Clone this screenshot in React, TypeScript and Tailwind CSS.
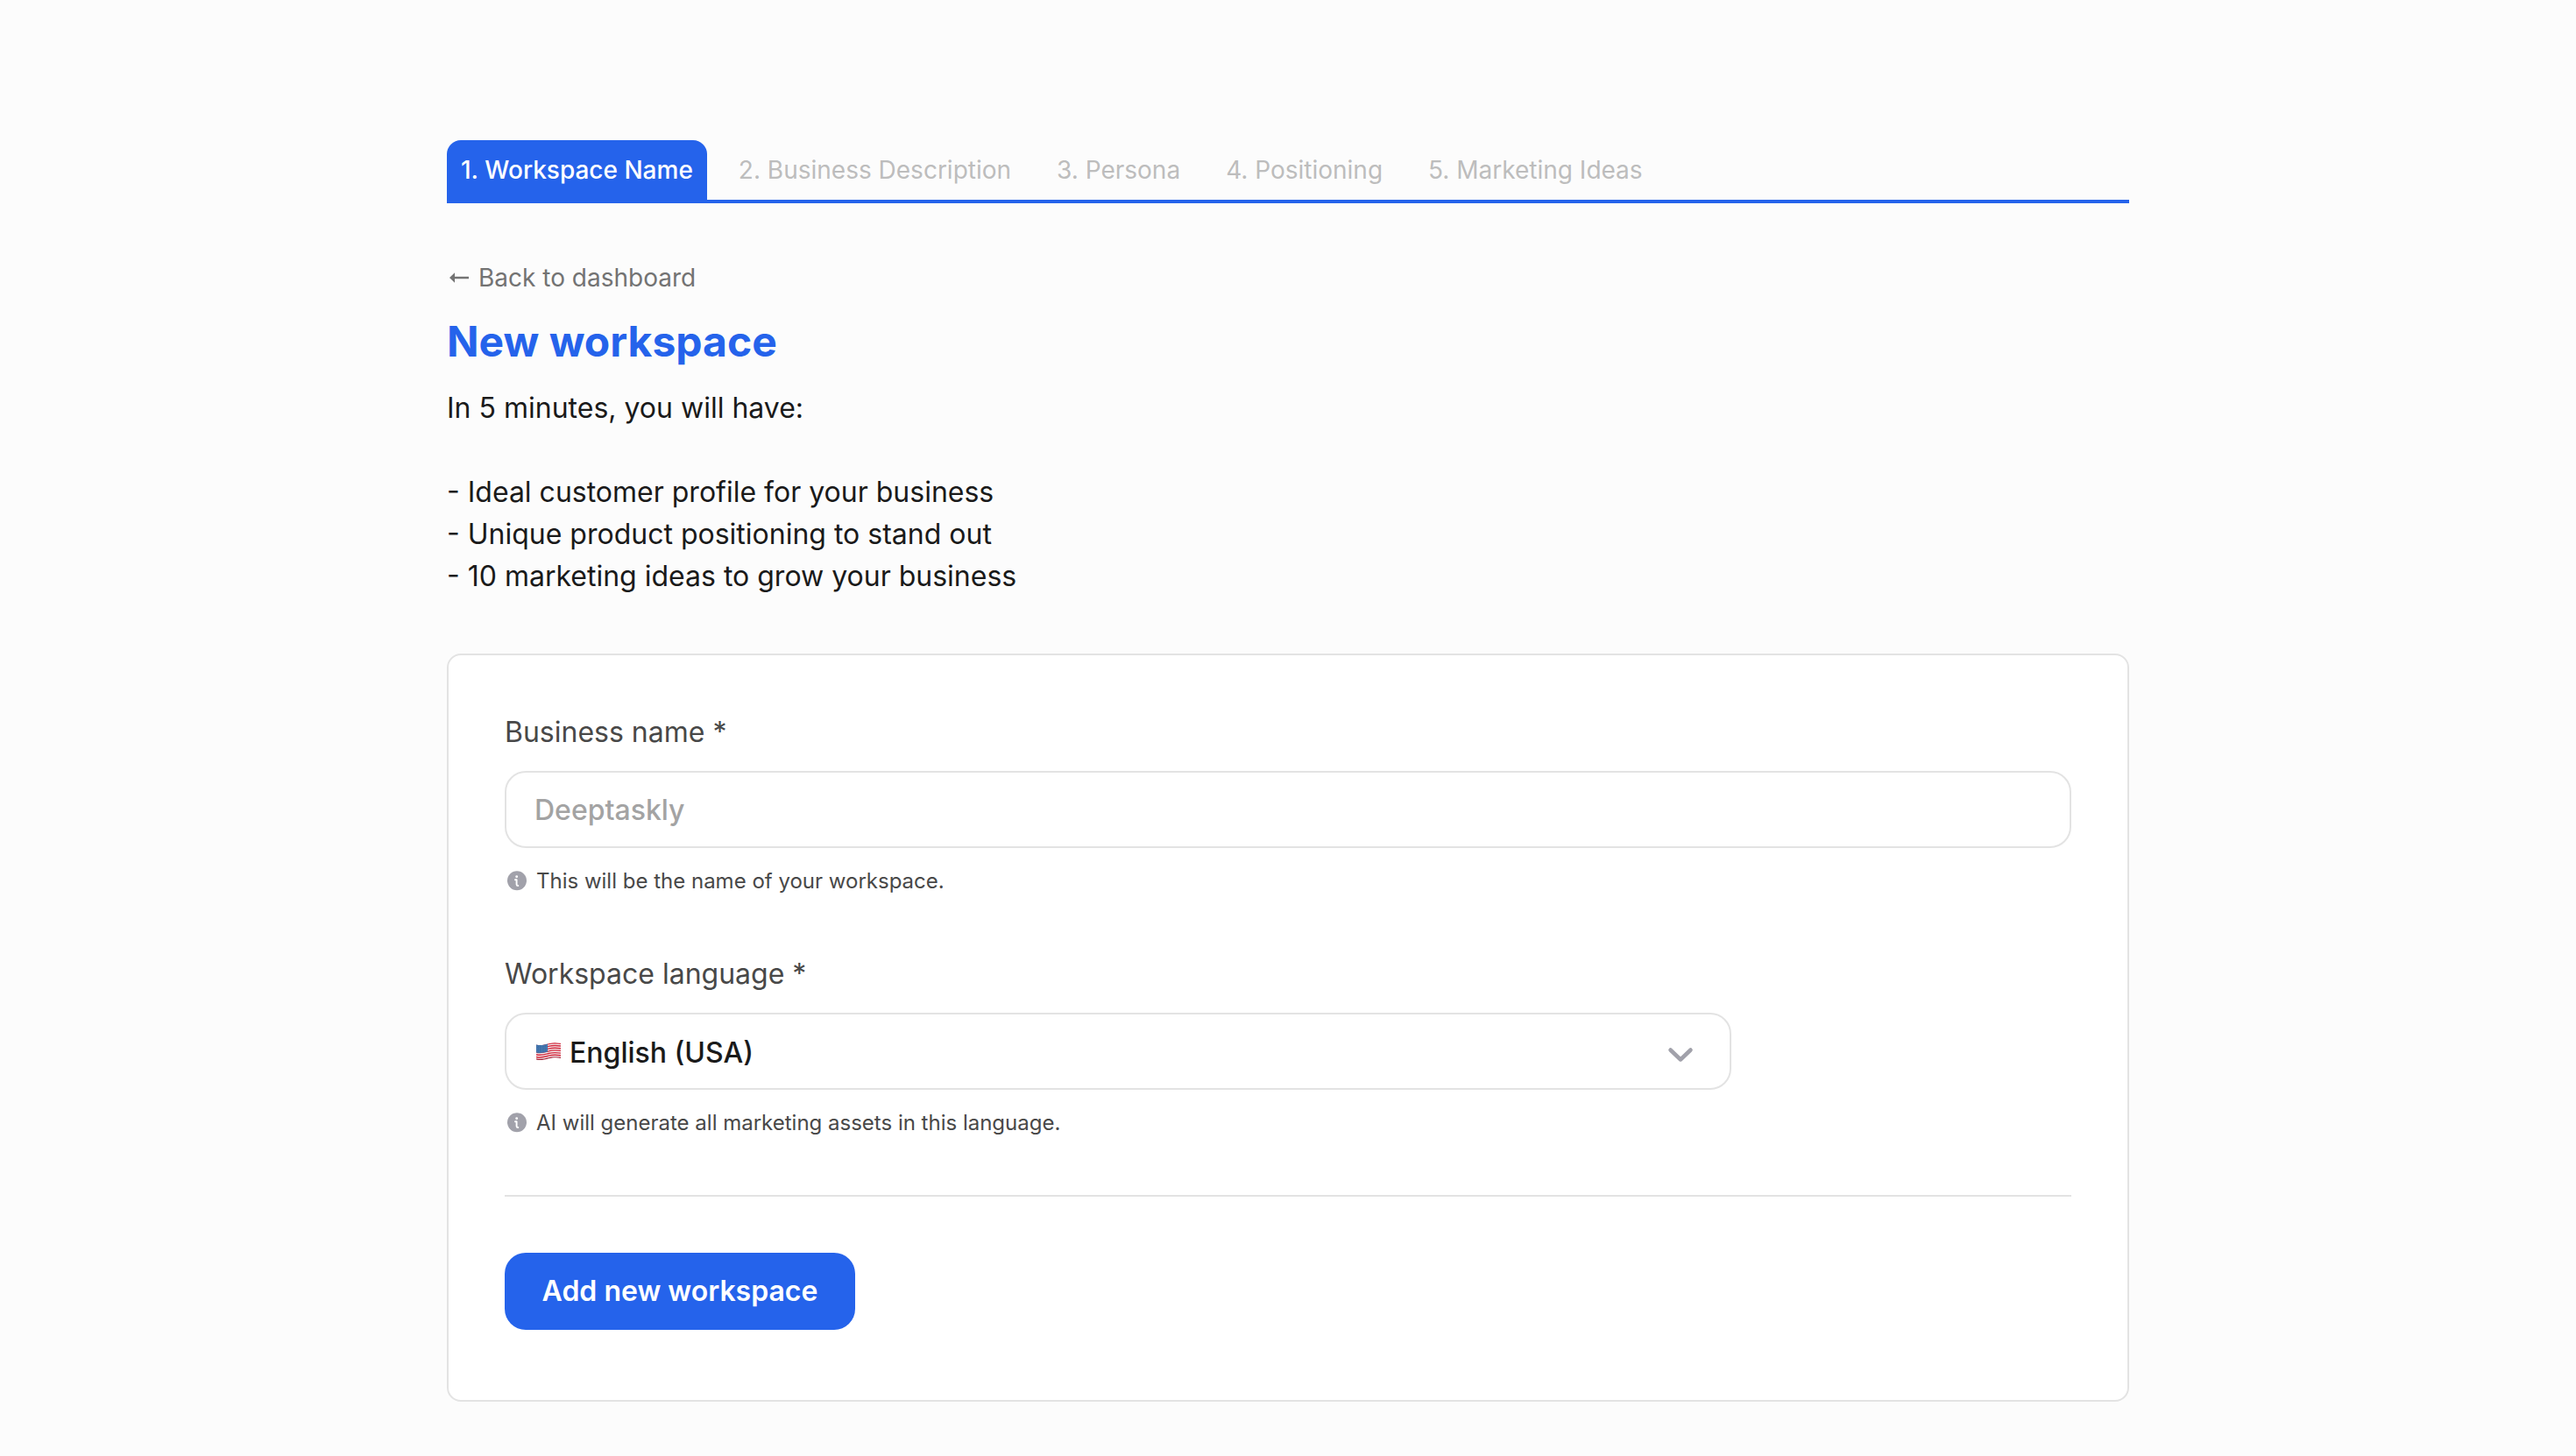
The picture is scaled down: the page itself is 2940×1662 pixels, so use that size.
import type { ReactNode } from "react";

const steps = [
  "1. Workspace Name",
  "2. Business Description",
  "3. Persona",
  "4. Positioning",
  "5. Marketing Ideas",
];

const outcomes = [
  "Ideal customer profile for your business",
  "Unique product positioning to stand out",
  "10 marketing ideas to grow your business",
];

function InfoIcon() {
  return (
    <svg viewBox="0 0 28 28" className="size-7 shrink-0" fill="none" aria-hidden="true">
      <circle cx="14" cy="13.300" r="11" fill="#a1a1aa" />
      <circle cx="13.700" cy="8.700" r="1.400" fill="#fff" />
      <path
        d="M12 12.200H13.600V17.600Q13.700 19 15.300 19"
        stroke="#fff"
        strokeWidth="1.900"
        strokeLinecap="round"
        strokeLinejoin="round"
      />
    </svg>
  );
}

function UsFlag() {
  return (
    <svg viewBox="0 0 28 20" className="h-5 w-7" aria-hidden="true">
      <defs>
        <clipPath id="us-flag-shape">
          <path d="M0 2.4C5 4 9 2.6 14 1.2S23 .1 28 .8V18C23 16.800 19 17.200 14 18.600S5 20.600 0 19.400Z" />
        </clipPath>
      </defs>
      <g clipPath="url(#us-flag-shape)">
        <rect width="28" height="20" fill="#f1eeee" />
        <g fill="none" stroke="#d5283d" strokeWidth="1.4">
          <path d="M0 2.900C5 4.500 9 3.100 14 1.700S23 .6 28 1.300" />
          <path d="M0 5.600C5 7.200 9 5.800 14 4.400S23 3.300 28 4" />
          <path d="M0 8.300C5 9.900 9 8.500 14 7.100S23 6 28 6.700" />
          <path d="M0 11C5 12.600 9 11.200 14 9.800S23 8.700 28 9.400" />
          <path d="M0 13.700C5 15.300 9 13.900 14 12.500S23 11.400 28 12.100" />
          <path d="M0 16.400C5 18 9 16.600 14 15.200S23 14.100 28 14.800" />
          <path d="M0 18.900C5 20.300 9 19.300 14 17.900S23 16.800 28 17.500" stroke="#a82338" />
        </g>
        <path d="M0 0H13V10.600C9 11.800 5 12.600 0 11.400Z" fill="#3a6ea8" />
        <g fill="#86a8cc">
          {[4.5, 6.5, 8.5, 10.5].map((y) =>
            [1.5, 4, 6.5, 9, 11.5].map((x) => <circle key={`${x}-${y}`} cx={x} cy={y - x / 12} r="0.45" />),
          )}
        </g>
      </g>
    </svg>
  );
}

function Field({ id, label, hint, children }: { id: string; label: string; hint: string; children: ReactNode }) {
  return (
    <div className="mb-16">
      <label htmlFor={id} className="mb-5 block text-[32px] leading-[48px] text-[#484848]">
        {label}
      </label>
      {children}
      <p id={`${id}-hint`} className="mt-5 flex items-center gap-2 text-2xl leading-9 text-[#484848]">
        <InfoIcon />
        {hint}
      </p>
    </div>
  );
}

export default function App() {
  return (
    <div className="min-h-screen bg-[#fcfcfc] px-8 pt-40 pb-[62px] font-['Inter',sans-serif] text-[#1a1a1a]">
      <main className="mx-auto max-w-[1920px]">
        <nav aria-label="Setup steps" className="flex gap-5 border-b-4 border-[#2563eb] text-[28px] leading-[42px]">
          {steps.map((step, i) =>
            i === 0 ? (
              <button
                key={step}
                type="button"
                aria-current="step"
                className="rounded-t-2xl bg-[#2563eb] px-4 py-[13px] font-medium text-white"
              >
                {step}
              </button>
            ) : (
              <button key={step} type="button" disabled className="px-4 py-[13px] text-[#bdbdbd]">
                {step}
              </button>
            ),
          )}
        </nav>

        <a
          href="#dashboard"
          className="mt-16 flex w-fit items-center gap-2 text-[28px] leading-[42px] text-[#737373]"
        >
          <svg viewBox="0 0 28 28" className="size-7" fill="currentColor" aria-hidden="true">
            <path d="M3 14 9 8.200V12.800H25V15.200H9V19.800Z" />
          </svg>
          Back to dashboard
        </a>
        <h1 className="mt-4 text-5xl leading-[72px] font-bold text-[#2563eb]">New workspace</h1>
        <div className="mt-4 text-[32px] leading-[48px]">
          <p>In 5 minutes, you will have:</p>
          <ul className="mt-12">
            {outcomes.map((item) => (
              <li key={item}>- {item}</li>
            ))}
          </ul>
        </div>

        <form
          className="mt-16 rounded-2xl border-2 border-[#e3e3e3] bg-white px-16 pt-16 pb-20"
          onSubmit={(e) => e.preventDefault()}
        >
          <Field id="business-name" label="Business name *" hint="This will be the name of your workspace.">
            <input
              id="business-name"
              type="text"
              required
              aria-describedby="business-name-hint"
              placeholder="Deeptaskly"
              className="block h-22 w-full rounded-3xl border-2 border-[#e3e3e3] bg-white px-8 text-[32px] font-medium placeholder:text-[#a3a3a3]"
            />
          </Field>

          <Field
            id="workspace-language"
            label="Workspace language *"
            hint="AI will generate all marketing assets in this language."
          >
            <div className="relative max-w-[1400px]">
              <select
                id="workspace-language"
                aria-describedby="workspace-language-hint"
                className="block h-22 w-full appearance-none rounded-3xl border-2 border-[#e3e3e3] bg-white pt-1 pr-20 pl-[72px] text-[32px] font-medium"
              >
                <option>English (USA)</option>
              </select>
              <div className="pointer-events-none absolute inset-y-0 right-[43px] left-9 flex items-center justify-between">
                <UsFlag />
                <svg viewBox="0 0 30 18" className="mt-2 h-[18px] w-[30px]" fill="none" aria-hidden="true">
                  <path
                    d="M3.500 3.500 15 14.500 26.500 3.500"
                    stroke="#a1a1aa"
                    strokeWidth="4.500"
                    strokeLinecap="round"
                    strokeLinejoin="round"
                  />
                </svg>
              </div>
            </div>
          </Field>

          <hr className="mb-16 border-t-2 border-[#e3e3e3]" />

          <button
            type="submit"
            className="block h-22 min-w-[400px] rounded-3xl bg-[#2563eb] px-10 text-[32px] leading-[48px] font-semibold text-white"
          >
            Add new workspace
          </button>
        </form>
      </main>
    </div>
  );
}
